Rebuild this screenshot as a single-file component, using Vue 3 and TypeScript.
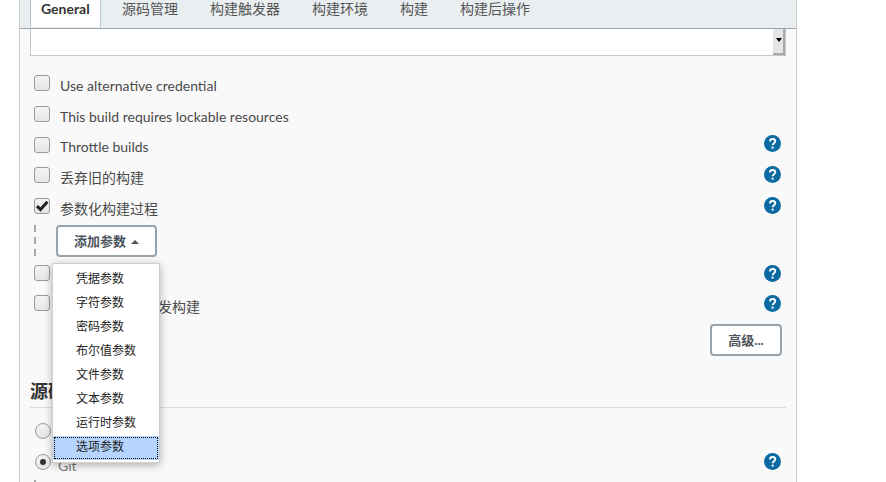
<script setup lang="ts">
const tabs: string[] = ['源码管理', '构建触发器', '构建环境', '构建', '构建后操作']
const menu: string[] = ['凭据参数', '字符参数', '密码参数', '布尔值参数', '文件参数', '文本参数', '运行时参数', '选项参数']
</script>

<template>
  <div class="page">
    <div class="panel">
      <div class="tabbar">
        <div class="tab active">General</div>
        <div v-for="t in tabs" :key="t" class="tab">{{ t }}</div>
      </div>
      <div class="form">
        <div class="selectbox">
          <div class="scroll"><span class="arrow"></span></div>
        </div>

        <div class="rows">
          <div class="row"><span class="check"></span><span class="label">Use alternative credential</span></div>
          <div class="row"><span class="check"></span><span class="label">This build requires lockable resources</span></div>
          <div class="row"><span class="check"></span><span class="label">Throttle builds</span>
            <svg class="help" viewBox="0 0 17 17"><circle cx="8.5" cy="8.5" r="8.5" fill="#0b6aa2"/><path d="M5.9 6.5c0-1.6 1.1-2.5 2.7-2.5s2.7.9 2.7 2.3c0 1.9-2.6 2-2.6 4" fill="none" stroke="#fff" stroke-width="1.8"/><rect x="7.6" y="11.6" width="2" height="2" fill="#fff"/></svg>
          </div>
          <div class="row"><span class="check"></span><span class="label">丢弃旧的构建</span>
            <svg class="help" viewBox="0 0 17 17"><circle cx="8.5" cy="8.5" r="8.5" fill="#0b6aa2"/><path d="M5.9 6.5c0-1.6 1.1-2.5 2.7-2.5s2.7.9 2.7 2.3c0 1.9-2.6 2-2.6 4" fill="none" stroke="#fff" stroke-width="1.8"/><rect x="7.6" y="11.6" width="2" height="2" fill="#fff"/></svg>
          </div>
          <div class="row"><span class="check">
            <svg class="tick" viewBox="0 0 16 16"><path d="M3 8.2 6.5 11.6 13.4 3.8" fill="none" stroke="#222" stroke-width="3"/></svg>
          </span><span class="label">参数化构建过程</span>
            <svg class="help" viewBox="0 0 17 17"><circle cx="8.5" cy="8.5" r="8.5" fill="#0b6aa2"/><path d="M5.9 6.5c0-1.6 1.1-2.5 2.7-2.5s2.7.9 2.7 2.3c0 1.9-2.6 2-2.6 4" fill="none" stroke="#fff" stroke-width="1.8"/><rect x="7.6" y="11.6" width="2" height="2" fill="#fff"/></svg>
          </div>
        </div>

        <div class="nested">
          <button class="btn add">添加参数<span class="up"></span></button>
        </div>

        <div class="rows second">
          <div class="row"><span class="check"></span><span class="label">关闭构建</span>
            <svg class="help" viewBox="0 0 17 17"><circle cx="8.5" cy="8.5" r="8.5" fill="#0b6aa2"/><path d="M5.9 6.5c0-1.6 1.1-2.5 2.7-2.5s2.7.9 2.7 2.3c0 1.9-2.6 2-2.6 4" fill="none" stroke="#fff" stroke-width="1.8"/><rect x="7.6" y="11.6" width="2" height="2" fill="#fff"/></svg>
          </div>
          <div class="row"><span class="check"></span><span class="label">在必要的时候并发构建</span>
            <svg class="help" viewBox="0 0 17 17"><circle cx="8.5" cy="8.5" r="8.5" fill="#0b6aa2"/><path d="M5.9 6.5c0-1.6 1.1-2.5 2.7-2.5s2.7.9 2.7 2.3c0 1.9-2.6 2-2.6 4" fill="none" stroke="#fff" stroke-width="1.8"/><rect x="7.6" y="11.6" width="2" height="2" fill="#fff"/></svg>
          </div>
        </div>

        <div class="adv"><button class="btn more">高级...</button></div>

        <h3 class="heading">源码管理</h3>

        <div class="radio-row none"><span class="radio"></span><span class="label">None</span></div>
        <div class="radio-row git"><span class="radio on"></span><span class="label">Git</span>
          <svg class="help" viewBox="0 0 17 17"><circle cx="8.5" cy="8.5" r="8.5" fill="#0b6aa2"/><path d="M5.9 6.5c0-1.6 1.1-2.5 2.7-2.5s2.7.9 2.7 2.3c0 1.9-2.6 2-2.6 4" fill="none" stroke="#fff" stroke-width="1.8"/><rect x="7.6" y="11.6" width="2" height="2" fill="#fff"/></svg>
        </div>
        <div class="tail"></div>
      </div>

      <ul class="menu">
        <li v-for="(m, i) in menu" :key="m" :class="{ sel: i === menu.length - 1 }"><span>{{ m }}</span></li>
      </ul>
    </div>
  </div>
</template>

<style>
html, body { margin: 0; background: #fff; overflow: hidden; }
</style>

<style scoped>
.page {
  width: 886px;
  height: 482px;
  overflow: hidden;
  background: #fff;
  font-family: Lato, "Noto Sans CJK SC", sans-serif;
  color: #333;
}
.panel {
  position: relative;
  box-sizing: border-box;
  width: 778px;
  height: 482px;
  margin-left: 19px;
  border-left: 1px solid #c9c9c9;
  border-right: 1px solid #c9c9c9;
  background: #f9f9f9;
}
.tabbar {
  box-sizing: border-box;
  height: 29px;
  display: flex;
  background: #e9eef0;
  border-bottom: 1px solid #9aa7b0;
  padding-left: 10px;
}
.tab {
  height: 28px;
  line-height: 18px;
  padding: 0 16px;
  font-size: 14px;
  color: #555;
  white-space: nowrap;
}
.tab.active {
  box-sizing: border-box;
  width: 71px;
  height: 27px;
  margin-right: 5px;
  padding: 0 10px;
  background: #fff;
  border-left: 1px solid #b9c3c9;
  border-right: 1px solid #b9c3c9;
  color: #333;
  font-weight: 700;
}
.form {
  padding: 0 10px;
}
.selectbox {
  box-sizing: border-box;
  position: relative;
  height: 27px;
  background: #fff;
  border: 1px solid #c6c6c6;
  border-top: 0;
}
.scroll {
  position: absolute;
  right: 0;
  top: 0;
  bottom: 0;
  width: 12px;
  box-sizing: border-box;
  background: #e6e6e6;
  border-right: 2px solid #a9a9a9;
  border-bottom: 2px solid #a9a9a9;
}
.arrow {
  position: absolute;
  left: 3px;
  top: 9px;
  width: 0;
  height: 0;
  border-left: 3px solid transparent;
  border-right: 3px solid transparent;
  border-top: 4px solid #000;
}
.rows {
  margin-top: 15px;
}
.row {
  position: relative;
  height: 30.7px;
  display: flex;
  align-items: center;
  padding-left: 4px;
  font-size: 14px;
}
.check {
  position: relative;
  flex: none;
  box-sizing: border-box;
  width: 16px;
  height: 16px;
  margin-top: -6px;
  border: 1px solid #9a9a9a;
  border-radius: 3px;
  background: linear-gradient(#f4f4f4, #e6e6e6);
}
.tick {
  position: absolute;
  left: -1px;
  top: -1px;
  width: 16px;
  height: 16px;
}
.label {
  margin-left: 10px;
  margin-top: -2px;
  color: #4a4a4a;
  white-space: nowrap;
}
.help {
  position: absolute;
  right: 5px;
  top: 3px;
  width: 17px;
  height: 17px;
}
.nested {
  height: 32px;
  margin-top: 0.5px;
  margin-left: 4px;
  padding-left: 22px;
  background-image: linear-gradient(#a8a8a8 58%, transparent 58%);
  background-size: 2px 12px;
  background-repeat: repeat-y;
}
.btn {
  box-sizing: border-box;
  height: 32px;
  background: #fff;
  border: 2px solid #95a3ad;
  border-radius: 4px;
  font-family: inherit;
  font-size: 13px;
  font-weight: 700;
  color: #4d545d;
  padding: 0;
}
.add {
  width: 101px;
  display: block;
}
.up {
  display: inline-block;
  vertical-align: 2px;
  margin-left: 5px;
  border-left: 4px solid transparent;
  border-right: 4px solid transparent;
  border-bottom: 4px solid #4d545d;
}
.second {
  margin-top: 5px;
}
.second .row:first-child { height: 29px; }
.second .row:last-child { height: 30.6px; }
.second .row:last-child .help { top: 4px; }
.second .row:last-child .label { margin-top: 0; }
.adv {
  display: flex;
  justify-content: flex-end;
  padding-right: 4px;
  margin-top: 2px;
}
.more { width: 72px; }
.heading {
  margin: 21px 0 0;
  height: 31px;
  line-height: 28px;
  font-size: 18px;
  font-weight: 700;
  color: #333;
  border-bottom: 1px solid #ddd;
  box-sizing: border-box;
}
.radio-row {
  position: relative;
  height: 31px;
  display: flex;
  align-items: center;
  padding-left: 5px;
  font-size: 14px;
}
.none { margin-top: 8px; }
.radio {
  flex: none;
  box-sizing: border-box;
  width: 16px;
  height: 16px;
  border: 1px solid #9a9a9a;
  border-radius: 50%;
  background: linear-gradient(#f4f4f4, #e6e6e6);
  position: relative;
  margin-top: -1px;
}
.radio.on::after {
  content: "";
  position: absolute;
  left: 4px;
  top: 4px;
  width: 6px;
  height: 6px;
  border-radius: 50%;
  background: #333;
}
.radio-row .label { margin-left: 7px; margin-top: 6px; color: #777; }
.radio-row .help { top: 6px; }
.tail {
  margin-left: 4px;
  margin-top: 2px;
  width: 2px;
  height: 2px;
  background: #a8a8a8;
}
.menu {
  position: absolute;
  left: 32px;
  top: 263px;
  box-sizing: border-box;
  width: 108px;
  height: 200px;
  margin: 0;
  padding: 4px 0 0;
  list-style: none;
  background: #fff;
  border: 1px solid #cfcfcf;
  box-shadow: 0 2px 8px rgba(0, 0, 0, 0.3);
  font-size: 12px;
  color: #222;
}
.menu li {
  height: 24px;
  line-height: 22px;
  padding-left: 23px;
  white-space: nowrap;
  box-sizing: border-box;
}
.menu li.sel {
  background: #b5d5ff;
  outline: 1px dotted #000;
  outline-offset: -2px;
}
</style>
